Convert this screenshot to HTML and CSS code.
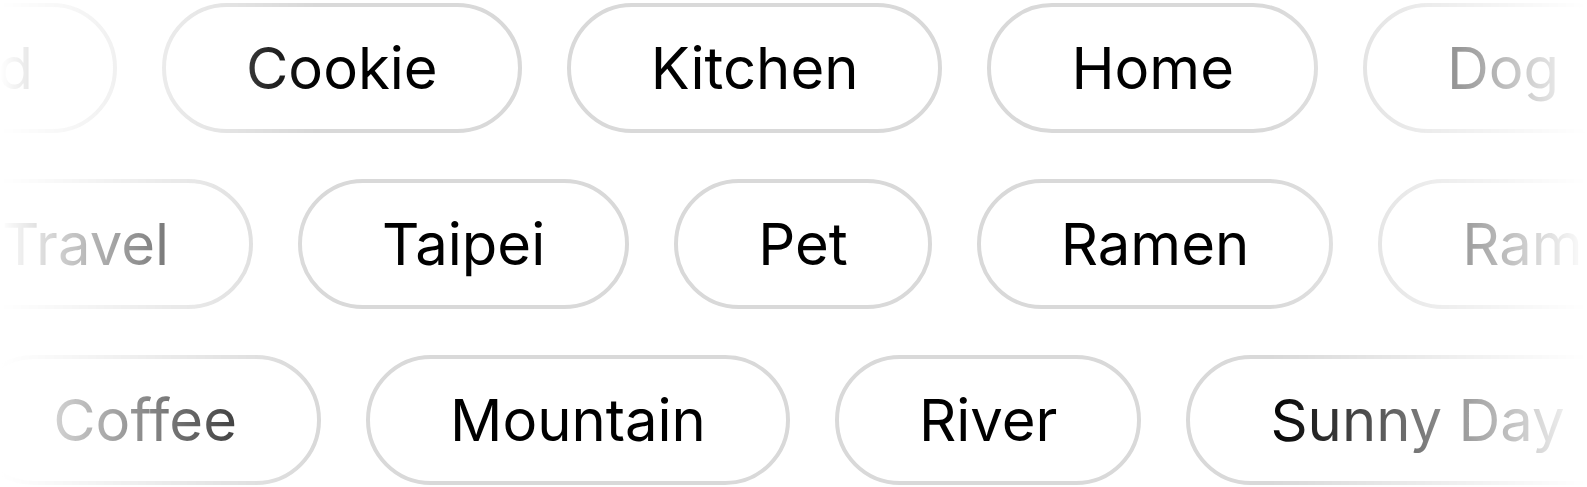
FILE: index.html
```html
<!DOCTYPE html>
<html lang="en">
<head>
<meta charset="utf-8">
<title>Tags marquee</title>
<link rel="stylesheet" href="styles.css">
</head>
<body>
<div class="marquee">
  <div class="row">
    <div class="lead lead-1"><span class="pill">Island</span></div>
    <span class="pill">Cookie</span>
    <span class="pill">Kitchen</span>
    <span class="pill">Home</span>
    <span class="pill">Dog</span>
  </div>
  <div class="row">
    <div class="lead lead-2"><span class="pill">Travel</span></div>
    <span class="pill">Taipei</span>
    <span class="pill">Pet</span>
    <span class="pill">Ramen</span>
    <span class="pill">Ramune</span>
  </div>
  <div class="row">
    <div class="lead lead-3"><span class="pill">Coffee</span></div>
    <span class="pill">Mountain</span>
    <span class="pill">River</span>
    <span class="pill">Sunny Day</span>
  </div>
</div>
</body>
</html>
```
FILE: styles.css
```css
html, body {
  margin: 0;
  padding: 0;
  background: #ffffff;
}

body {
  font-family: Inter, "Noto Sans", sans-serif;
  width: 1587px;
  height: 487px;
  overflow: hidden;
}

.marquee {
  width: 1587px;
  height: 487px;
  overflow: hidden;
  padding-top: 3px;
  box-sizing: border-box;
  display: flex;
  flex-direction: column;
  gap: 46px;
  -webkit-mask-image: linear-gradient(to right, transparent 0%, #000 20%, #000 80%, transparent 100%);
  mask-image: linear-gradient(to right, transparent 0%, #000 20%, #000 80%, transparent 100%);
}

.row {
  display: flex;
  flex-wrap: nowrap;
  gap: 45px;
  height: 130px;
}

.lead {
  flex: 0 0 auto;
  display: flex;
  justify-content: flex-end;
}

.lead-1 { width: 117px; }
.lead-2 { width: 253px; }
.lead-3 { width: 321px; }

.pill {
  flex: 0 0 auto;
  box-sizing: border-box;
  height: 130px;
  display: flex;
  align-items: center;
  padding: 0 80px;
  border: 4px solid #d9d9d9;
  border-radius: 9999px;
  font-size: 58px;
  line-height: 1;
  font-weight: 400;
  color: #000000;
  white-space: nowrap;
}
```
